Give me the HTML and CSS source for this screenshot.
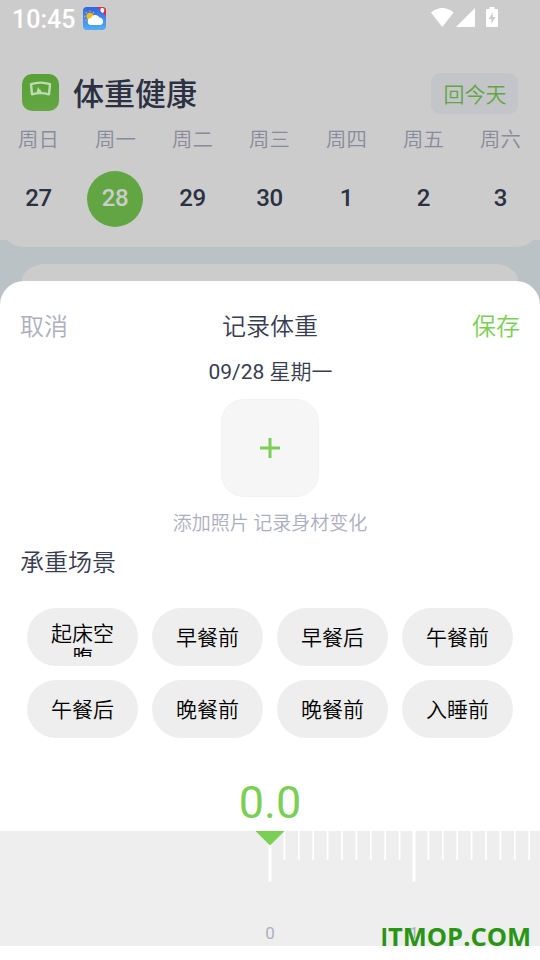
FILE: index.html
```html
<!DOCTYPE html>
<html lang="zh-CN">
<head>
<meta charset="utf-8">
<title>体重健康</title>
<link rel="stylesheet" href="styles.css">
</head>
<body>
<div class="phone">
  <div class="top">
    <div class="status">
      <span class="clock">10:45</span>
      <svg class="weather" width="23" height="23" viewBox="0 0 23 23">
        <defs><linearGradient id="sky" x1="0" y1="0" x2="0" y2="1"><stop offset="0" stop-color="#3564e4"/><stop offset="1" stop-color="#50aff5"/></linearGradient><clipPath id="tile"><rect width="23" height="23" rx="4"/></clipPath></defs>
        <g clip-path="url(#tile)">
          <rect width="23" height="23" fill="url(#sky)"/>
          <path d="M14 0h9v9z" fill="#e52b38"/>
          <path d="M17.500 1.500l2-.8 1.800 1.300-.3 3-1.500 1-2-1.800z" fill="#fff"/>
          <circle cx="7" cy="9.300" r="3.500" fill="#f7bd16"/>
          <path d="M7 3.500v1.200M2.600 5l1.200 1.200M1 9.400h1.300M2.300 13.600l1.200-1M11 5l-1 1" stroke="#e5b52c" stroke-width="1.100"/>
          <path d="M8.500 18a3.500 3.500 0 0 1-.5-7A4.600 4.600 0 0 1 16.500 10.500a3.900 3.900 0 0 1 1.200 7.500z" fill="#fff"/>
        </g>
      </svg>
      <svg class="signals" width="70" height="22" viewBox="0 0 70 22">
        <path d="M1 5.500Q12.300-3.500 23.600 5.500L12.300 20z" fill="#fff"/>
        <path d="M45 1v19H26z" fill="#fff"/>
        <path d="M59.500 0h5v2H67a1 1 0 0 1 1 1v16a1 1 0 0 1-1 1H57a1 1 0 0 1-1-1V3a1 1 0 0 1 1-1h2.500z" fill="#fff"/>
        <path d="M62.700 5.500l-4 6.500h2.700v5l4-7h-2.700z" fill="#ccc"/>
      </svg>
    </div>
    <div class="title-bar">
      <svg class="logo" width="37" height="37" viewBox="0 0 37 37">
        <defs><linearGradient id="leaf" x1="0" y1="0" x2="0" y2="1"><stop offset="0" stop-color="#57a036"/><stop offset="1" stop-color="#64a744"/></linearGradient></defs>
        <rect width="37" height="37" rx="10" fill="url(#leaf)"/>
        <path d="M9 10.200Q18.500 7 28 10.200L27 20.300Q18.500 18 10 20.300z" fill="none" stroke="#bfdbb2" stroke-width="2.400" stroke-linejoin="round"/>
        <path d="M14.500 18.800L16 12.800l1.500 2.700 1 .2 1.500 3.100z" fill="#bfdbb2"/>
      </svg>
      <h1>体重健康</h1>
      <button class="today">回今天</button>
    </div>
    <div class="week names"><span>周日</span><span>周一</span><span>周二</span><span>周三</span><span>周四</span><span>周五</span><span>周六</span></div>
    <div class="week days"><span>27</span><span class="on">28</span><span>29</span><span>30</span><span>1</span><span>2</span><span>3</span></div>
  </div>
  <div class="week-foot"></div>
  <div class="card"></div>
  <div class="sheet">
    <div class="actions"><span class="cancel">取消</span><span class="heading">记录体重</span><span class="save">保存</span></div>
    <div class="date"><span class="digits">09/28</span> 星期一</div>
    <div class="photo"><svg width="20" height="20" viewBox="0 0 20 20"><path d="M10 0v20M0 10h20" stroke="#7bcf55" stroke-width="3"/></svg></div>
    <div class="hint">添加照片 记录身材变化</div>
    <h2>承重场景</h2>
    <div class="chips">
      <div class="chip"><span class="wrap">起床空腹</span></div>
      <div class="chip"><span>早餐前</span></div>
      <div class="chip"><span>早餐后</span></div>
      <div class="chip"><span>午餐前</span></div>
      <div class="chip"><span>午餐后</span></div>
      <div class="chip"><span>晚餐前</span></div>
      <div class="chip"><span>晚餐前</span></div>
      <div class="chip"><span>入睡前</span></div>
    </div>
    <div class="value">0.0</div>
    <div class="ruler">
      <svg width="540" height="52" viewBox="0 0 540 52">
        <path d="M284.400 0v29M298.800 0v29M313.200 0v29M327.600 0v29M342 0v29M356.400 0v29M370.800 0v29M385.200 0v29M399.600 0v29M428.400 0v29M442.800 0v29M457.200 0v29M471.600 0v29M486 0v29M500.400 0v29M514.800 0v29M529.200 0v29" stroke="#fff" stroke-width="1.700"/>
        <path d="M270 0v50.500M414 0v50.500" stroke="#fff" stroke-width="3"/>
        <path d="M255.500 0h29L270 14.500z" fill="#7bcf55"/>
      </svg>
      <div class="marks"><span>0</span><span>1</span></div>
      <div class="watermark"><span class="stem">I</span>TMOP.COM</div>
    </div>
  </div>
</div>
</body>
</html>
```
FILE: styles.css
```css
* { box-sizing: border-box; }
body { margin: 0; font-family: Roboto, "Noto Sans CJK SC DemiLight", "Noto Sans CJK SC", sans-serif; }
.phone { width: 540px; height: 960px; overflow: hidden; background: #bac2c6; display: flex; flex-direction: column; }
.top { height: 240px; flex: none; background: #ccc; }
.status { height: 40px; display: flex; align-items: flex-start; padding: 7px 40px 0 12px; }
.clock { font-size: 25px; line-height: 26px; font-weight: 500; color: #fff; width: 71px; white-space: nowrap; }
.signals { margin-left: auto; }
.title-bar { display: flex; align-items: center; height: 41px; margin-top: 33px; padding: 0 22px; }
h1 { margin: 2px 0 0 14px; font: 500 31px/40px Roboto, "Noto Sans CJK SC", sans-serif; color: #2b3142; }
.logo { position: relative; top: -1px; }
.today { margin-left: auto; width: 87px; height: 41px; border: 0; border-radius: 9px; padding: 0 0 0 1px; background: #c4c5c9; color: #62a644; font: 350 21px/41px "Noto Sans CJK SC DemiLight", "Noto Sans CJK SC", sans-serif; }
.week { display: grid; grid-template-columns: repeat(7, 1fr); justify-items: center; align-items: center; text-align: center; width: 539px; }
.names { height: 30px; margin-top: 11px; font-size: 20.4px; line-height: 30px; font-weight: 350; color: #888b9b; }
.days { height: 56px; margin-top: 16px; font-size: 24px; font-weight: 500; line-height: 54px; color: #2b3142; align-items: start; letter-spacing: -.3px; }
.on { width: 56px; height: 56px; border-radius: 50%; background: #62a644; color: #ccc; margin-left: -1px; }
.week-foot { height: 7px; flex: none; background: #ccc; clip-path: inset(-40px 0 0 0 round 24px); }
.card { height: 17px; flex: none; margin: 17px 22px 0; background: #ccc; border-radius: 24px 24px 0 0 / 17px 17px 0 0; }
.sheet { flex: none; height: 679px; background: #fff; border-radius: 24px 24px 0 0; }
.actions { display: grid; grid-template-columns: 1fr auto 1fr; padding: 28px 20px 0; font-size: 24px; line-height: 36px; font-weight: 350; }
.cancel { color: #adafc0; }
.heading { color: #383d52; }
.save { color: #7bcf55; text-align: right; }
.date { margin-top: 11px; padding-left: 1px; text-align: center; font-size: 21px; line-height: 32px; font-weight: 350; color: #383d52; }
.digits { font-weight: 400; }
.photo { width: 98px; height: 98px; margin: 11px auto 0; border-radius: 23px; border: 1px solid #f2f2f2; background: #f6f6f6; display: flex; align-items: center; justify-content: center; }
.hint { margin-top: 13px; text-align: center; font-size: 19px; line-height: 28px; font-weight: 350; color: #adafc0; }
h2 { margin: 7px 0 0 20px; font-size: 24px; line-height: 36px; font-weight: 350; color: #383d52; }
.chips { display: grid; grid-template-columns: repeat(4, 111px); grid-auto-rows: 58px; gap: 14px; margin: 27px 27px 0; }
.chip { display: flex; align-items: center; justify-content: center; border-radius: 29px; background: #eee; color: #000; font-size: 21px; line-height: 30px; font-weight: 350; padding-top: 2px; }
.wrap { width: 64px; height: 38px; line-height: 24px; padding-top: 3px; margin-top: -1px; text-align: center; overflow: hidden; }
.value { margin-top: 37px; height: 56px; text-align: center; font-size: 45px; line-height: 56px; color: #7bcf55; }
.ruler { position: relative; height: 115px; background: #eee; overflow: hidden; }
.ruler svg { display: block; }
.marks { display: flex; gap: 124px; margin: 40px 0 0 260px; font-size: 17px; line-height: 20px; color: #adafc0; }
.marks span { width: 20px; text-align: center; }
.watermark { position: absolute; right: 9px; bottom: -7px; font: 700 25.500px/34px "Open Sans", sans-serif; color: #299613; }
.stem { font-family: Lato, sans-serif; }
```
